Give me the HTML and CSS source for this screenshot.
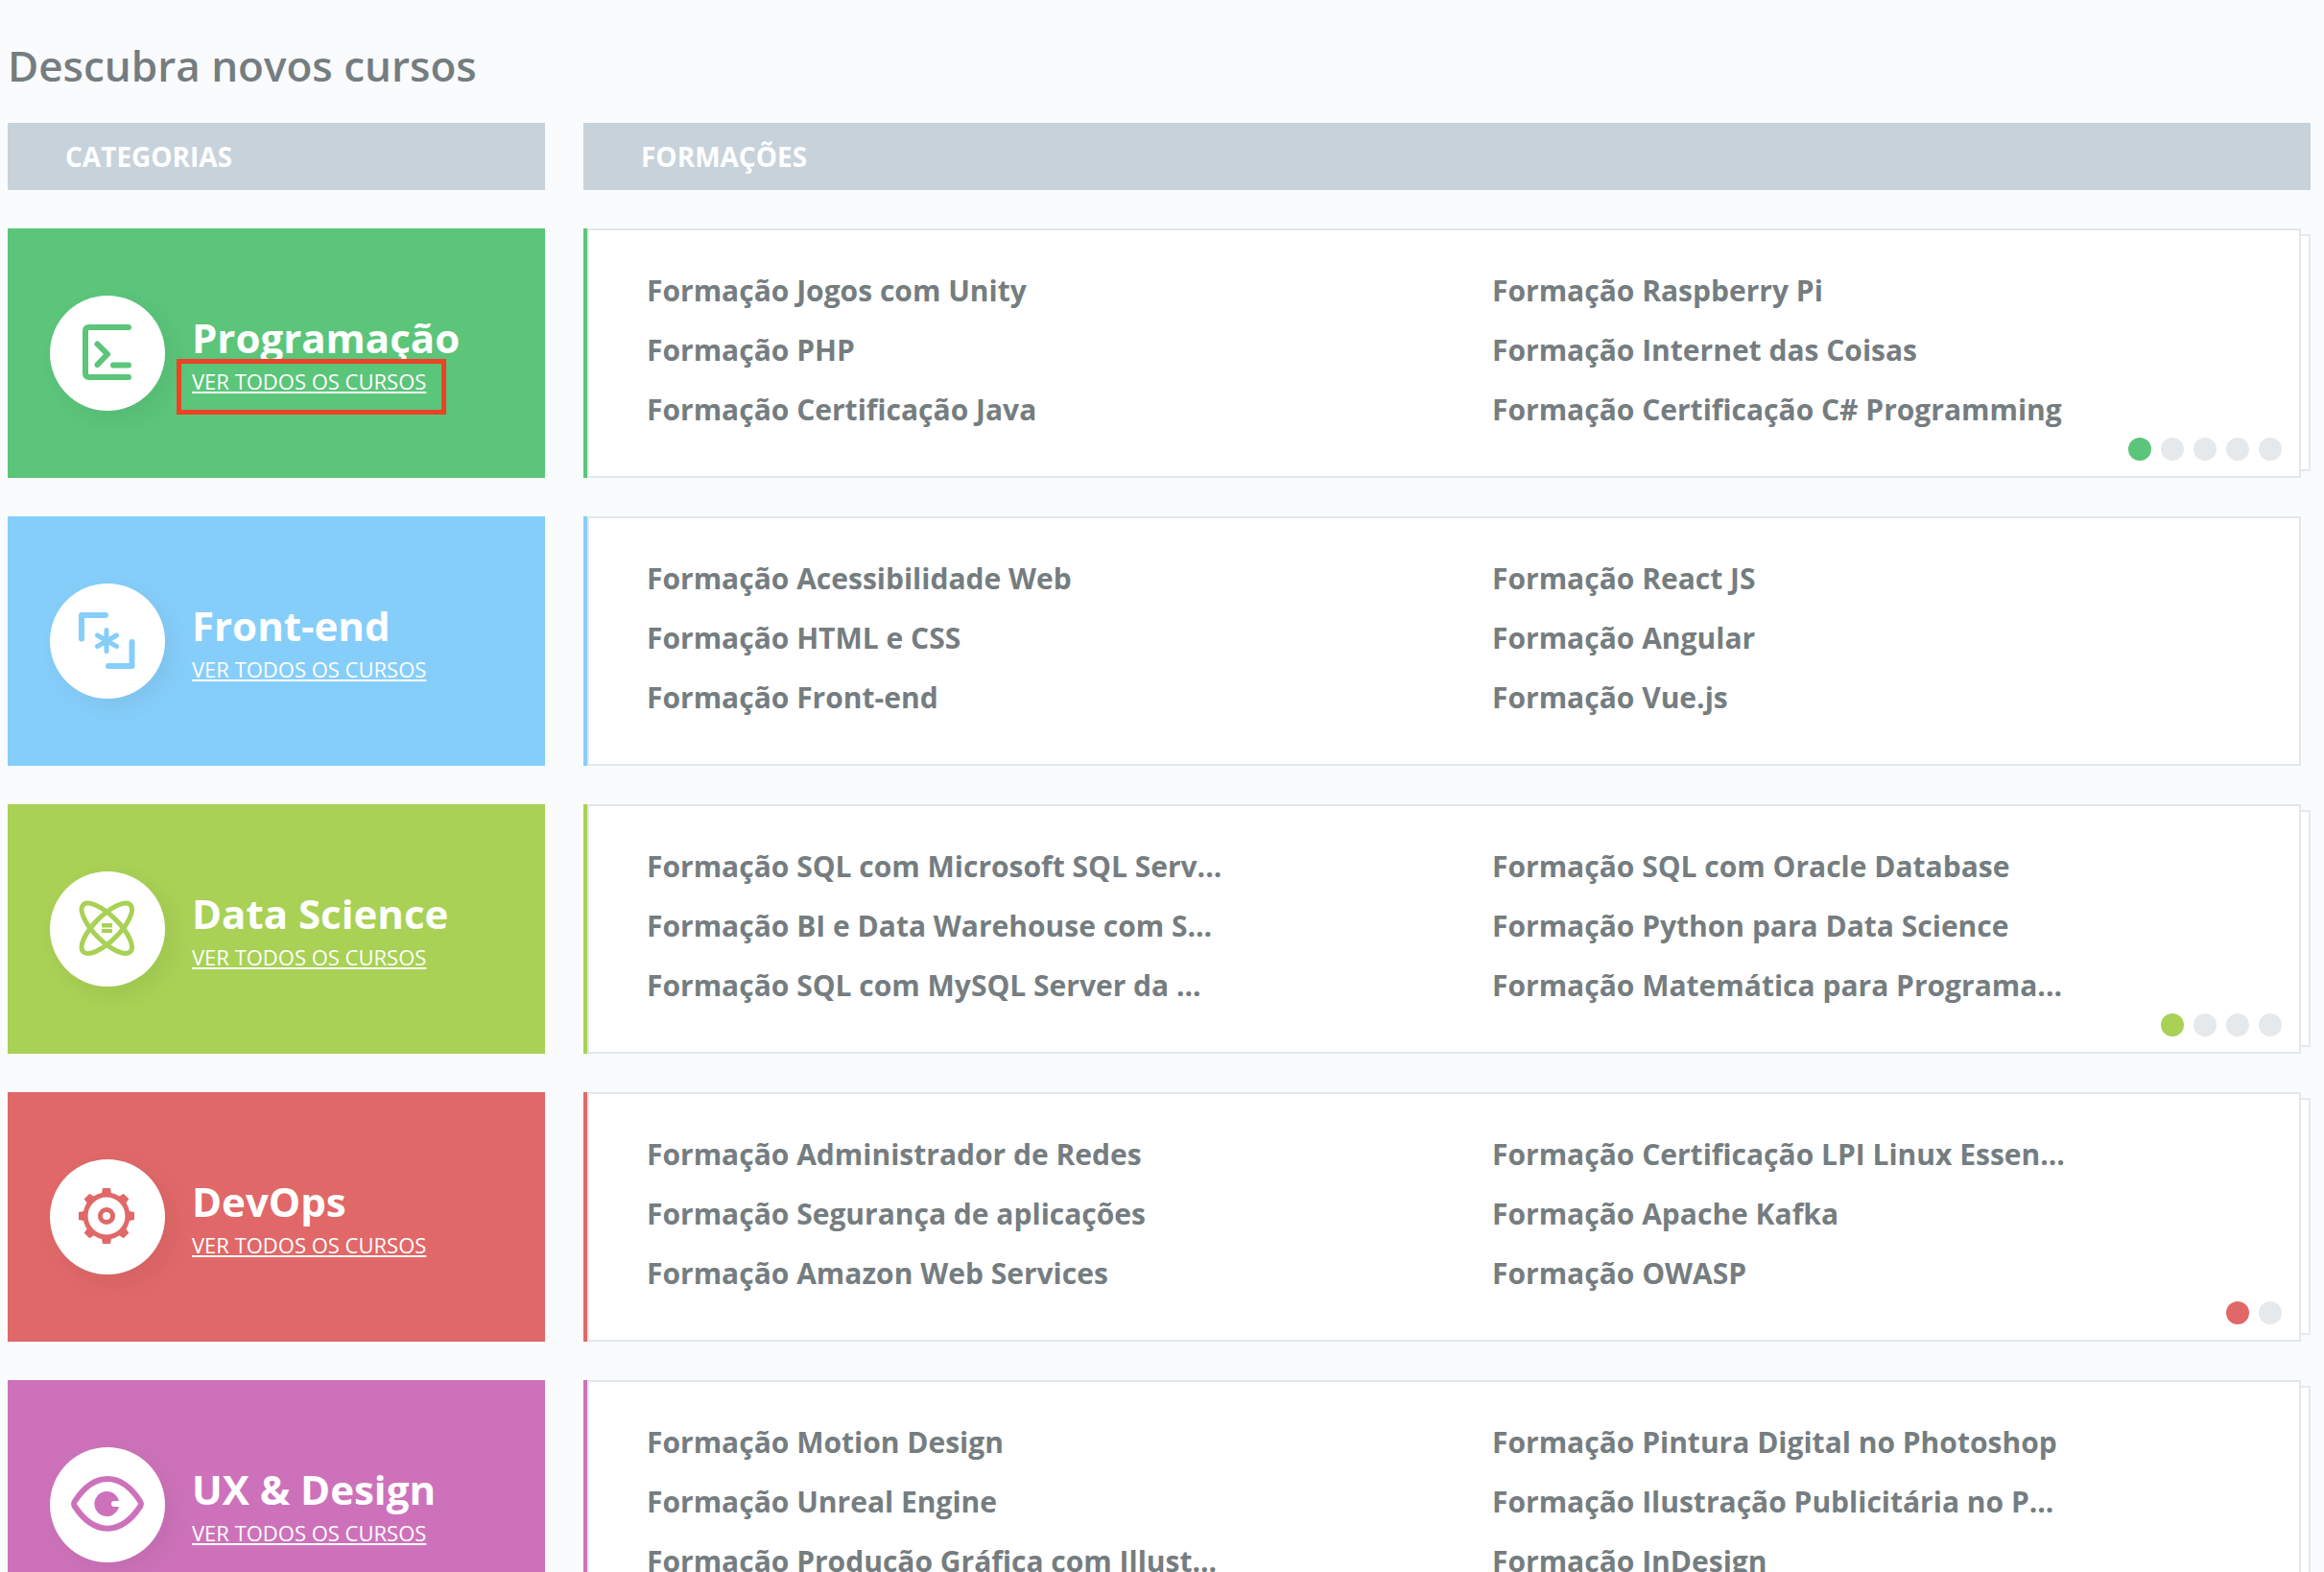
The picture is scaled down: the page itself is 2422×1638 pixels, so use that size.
FILE: index.html
```html
<!DOCTYPE html>
<html lang="pt-BR">
<head>
  <meta charset="utf-8">
  <meta name="viewport" content="width=device-width, initial-scale=1">
  <title>Descubra novos cursos</title>
  <link rel="stylesheet" href="styles.css">
</head>
<body>
<main class="page">
  <h1 class="page-title">Descubra novos cursos</h1>

  <div class="row">
    <h2 class="column-title">CATEGORIAS</h2>
    <h2 class="column-title">FORMAÇÕES</h2>
  </div>

  <section class="row programming">
    <div class="category">
      <span class="badge">
        <svg class="icon" viewBox="0 0 120 120" aria-hidden="true">
          <g class="line">
            <path d="M82 33H41Q37 33 37 37V81Q37 85 41 85H82"/>
            <path d="M49.500 50.500L60 61L49.500 72M66 72.500H82"/>
          </g>
        </svg>
      </span>
      <div class="category-text">
        <h3 class="category-name">Programação</h3>
        <a class="category-link marked" href="#programacao">VER TODOS OS CURSOS</a>
      </div>
    </div>
    <div class="stack has-more">
      <div class="card">
        <ul class="courses">
          <li><a href="#">Formação Jogos com Unity</a></li>
          <li><a href="#">Formação Raspberry Pi</a></li>
          <li><a href="#">Formação PHP</a></li>
          <li><a href="#">Formação Internet das Coisas</a></li>
          <li><a href="#">Formação Certificação Java</a></li>
          <li><a href="#">Formação Certificação C# Programming</a></li>
        </ul>
        <div class="dots">
          <button class="dot active" type="button" aria-label="Página 1"></button>
          <button class="dot" type="button" aria-label="Página 2"></button>
          <button class="dot" type="button" aria-label="Página 3"></button>
          <button class="dot" type="button" aria-label="Página 4"></button>
          <button class="dot" type="button" aria-label="Página 5"></button>
        </div>
      </div>
    </div>
  </section>

  <section class="row frontend">
    <div class="category">
      <span class="badge">
        <svg class="icon" viewBox="0 0 120 120" aria-hidden="true">
          <g class="line">
            <path d="M58 33H33V57.500M85.500 61V86H61"/>
            <path class="thin" d="M59 48.500V70.500M49.500 54L69.500 65.500M69.500 54L49.500 65.500"/>
          </g>
        </svg>
      </span>
      <div class="category-text">
        <h3 class="category-name">Front-end</h3>
        <a class="category-link" href="#front-end">VER TODOS OS CURSOS</a>
      </div>
    </div>
    <div class="stack">
      <div class="card">
        <ul class="courses">
          <li><a href="#">Formação Acessibilidade Web</a></li>
          <li><a href="#">Formação React JS</a></li>
          <li><a href="#">Formação HTML e CSS</a></li>
          <li><a href="#">Formação Angular</a></li>
          <li><a href="#">Formação Front-end</a></li>
          <li><a href="#">Formação Vue.js</a></li>
        </ul>
      </div>
    </div>
  </section>

  <section class="row data">
    <div class="category">
      <span class="badge">
        <svg class="icon" viewBox="0 0 120 120" aria-hidden="true">
          <g class="line thin">
            <ellipse cx="59.300" cy="59.300" rx="34.700" ry="13" transform="rotate(45 59.300 59.300)"/>
            <ellipse cx="59.300" cy="59.300" rx="34.700" ry="13" transform="rotate(-45 59.300 59.300)"/>
          </g>
          <path class="fill" d="M54 54H65V58.500H54ZM54 60H65V64H54Z"/>
        </svg>
      </span>
      <div class="category-text">
        <h3 class="category-name">Data Science</h3>
        <a class="category-link" href="#data-science">VER TODOS OS CURSOS</a>
      </div>
    </div>
    <div class="stack has-more">
      <div class="card">
        <ul class="courses">
          <li><a href="#">Formação SQL com Microsoft SQL Serv...</a></li>
          <li><a href="#">Formação SQL com Oracle Database</a></li>
          <li><a href="#">Formação BI e Data Warehouse com S...</a></li>
          <li><a href="#">Formação Python para Data Science</a></li>
          <li><a href="#">Formação SQL com MySQL Server da ...</a></li>
          <li><a href="#">Formação Matemática para Programa...</a></li>
        </ul>
        <div class="dots">
          <button class="dot active" type="button" aria-label="Página 1"></button>
          <button class="dot" type="button" aria-label="Página 2"></button>
          <button class="dot" type="button" aria-label="Página 3"></button>
          <button class="dot" type="button" aria-label="Página 4"></button>
        </div>
      </div>
    </div>
  </section>

  <section class="row devops">
    <div class="category">
      <span class="badge">
        <svg class="icon" viewBox="0 0 120 120" aria-hidden="true">
          <defs>
            <path id="tooth" d="M55 30H63L64.500 38H53.500Z"/>
          </defs>
          <g class="fill">
            <use href="#tooth"/>
            <use href="#tooth" transform="rotate(45 59 59)"/>
            <use href="#tooth" transform="rotate(90 59 59)"/>
            <use href="#tooth" transform="rotate(135 59 59)"/>
            <use href="#tooth" transform="rotate(180 59 59)"/>
            <use href="#tooth" transform="rotate(225 59 59)"/>
            <use href="#tooth" transform="rotate(270 59 59)"/>
            <use href="#tooth" transform="rotate(315 59 59)"/>
          </g>
          <g class="line thin">
            <circle cx="59" cy="59" r="21.900"/>
            <circle cx="59" cy="59" r="6.500"/>
          </g>
        </svg>
      </span>
      <div class="category-text">
        <h3 class="category-name">DevOps</h3>
        <a class="category-link" href="#devops">VER TODOS OS CURSOS</a>
      </div>
    </div>
    <div class="stack has-more">
      <div class="card">
        <ul class="courses">
          <li><a href="#">Formação Administrador de Redes</a></li>
          <li><a href="#">Formação Certificação LPI Linux Essen...</a></li>
          <li><a href="#">Formação Segurança de aplicações</a></li>
          <li><a href="#">Formação Apache Kafka</a></li>
          <li><a href="#">Formação Amazon Web Services</a></li>
          <li><a href="#">Formação OWASP</a></li>
        </ul>
        <div class="dots">
          <button class="dot active" type="button" aria-label="Página 1"></button>
          <button class="dot" type="button" aria-label="Página 2"></button>
        </div>
      </div>
    </div>
  </section>

  <section class="row design">
    <div class="category">
      <span class="badge">
        <svg class="icon" viewBox="0 0 120 120" aria-hidden="true">
          <g class="line">
            <path d="M25.500 57C46 25 74 25 94.500 57Q95.500 59 94.500 61C74 92.500 46 92.500 25.500 61Q24.500 59 25.500 57Z"/>
          </g>
          <path class="fill" d="M72 56H67A3 3 0 0 0 67 62H72A13 13 0 1 1 72 56Z"/>
        </svg>
      </span>
      <div class="category-text">
        <h3 class="category-name">UX &amp; Design</h3>
        <a class="category-link" href="#ux-design">VER TODOS OS CURSOS</a>
      </div>
    </div>
    <div class="stack has-more">
      <div class="card">
        <ul class="courses">
          <li><a href="#">Formação Motion Design</a></li>
          <li><a href="#">Formação Pintura Digital no Photoshop</a></li>
          <li><a href="#">Formação Unreal Engine</a></li>
          <li><a href="#">Formação Ilustração Publicitária no P...</a></li>
          <li><a href="#">Formação Produção Gráfica com Illust...</a></li>
          <li><a href="#">Formação InDesign</a></li>
        </ul>
      </div>
    </div>
  </section>
</main>
</body>
</html>
```
FILE: styles.css
```css
* {
  box-sizing: border-box;
}

html {
  scrollbar-width: none;
}

body {
  margin: 0;
  background: #fafbfd;
  color: #757d80;
  font-family: "Open Sans", "Noto Sans", sans-serif;
}

h1, h2, h3, ul {
  margin: 0;
  padding: 0;
}

.page {
  display: flex;
  flex-direction: column;
  gap: 40px;
  padding: 38px 14px 40px 8px;
}

.page-title {
  margin-bottom: -10px;
  font-size: 44px;
  line-height: 60px;
  font-weight: 600;
}

.row {
  display: grid;
  grid-template-columns: 560px minmax(0, 1fr);
  gap: 40px;
}

.column-title {
  padding: 0 60px;
  background: #c7d2db;
  color: #fff;
  font-size: 28px;
  line-height: 70px;
  font-weight: 700;
}

.programming { --accent: #5bc57a; }
.frontend { --accent: #86cefa; }
.data { --accent: #a8d155; }
.devops { --accent: #e06868; }
.design { --accent: #cd72ba; }

/* Category tile */

.category {
  display: flex;
  align-items: center;
  gap: 28px;
  min-height: 260px;
  padding-left: 44px;
  background: var(--accent);
  color: #fff;
}

.badge {
  flex: none;
  width: 120px;
  height: 120px;
  border-radius: 50%;
  background: #fff;
  box-shadow: 8px 8px 24px rgba(0, 0, 0, 0.06);
}

.icon {
  display: block;
  width: 120px;
  height: 120px;
}

.line {
  fill: none;
  stroke: var(--accent);
  stroke-width: 6;
  stroke-linecap: round;
  stroke-linejoin: round;
}

.thin {
  stroke-width: 5;
}

.fill {
  fill: var(--accent);
}

.category-text {
  display: flex;
  flex-direction: column;
  align-items: flex-start;
  padding-top: 4px;
}

.category-name {
  font-size: 42px;
  line-height: 54px;
  font-weight: 700;
}

.category-link {
  position: relative;
  color: inherit;
  font-size: 22px;
  line-height: 36px;
  text-decoration-thickness: 2px;
  text-underline-offset: 2px;
}

.marked::after {
  content: "";
  position: absolute;
  inset: -5px -21px -17px -16px;
  border: 5px solid #ec4226;
}

/* Course card */

.stack {
  position: relative;
  display: grid;
  padding-right: 10px;
}

.has-more::before {
  content: "";
  position: absolute;
  inset: 6px 0 7px auto;
  width: 40px;
  border: 2px solid #e5e9ed;
  background: #fff;
}

.card {
  position: relative;
  padding: 32px 0 32px 60px;
  border: 2px solid #e3e7ec;
  background: #fff;
  margin-left: 4px;
  box-shadow: -4px 0 0 var(--accent);
}

.courses {
  display: grid;
  grid-template-columns: repeat(2, minmax(0, 1fr));
  column-gap: 40px;
  list-style: none;
  font-size: 30px;
  line-height: 62px;
  font-weight: 700;
}

.courses a {
  color: inherit;
  text-decoration: none;
}

.dots {
  position: absolute;
  right: 18px;
  bottom: 16px;
  display: flex;
  gap: 10px;
}

.dot {
  width: 24px;
  height: 24px;
  padding: 0;
  border: 0;
  border-radius: 50%;
  background: #e5e9eb;
}

.dot.active {
  background: var(--accent);
}
```
